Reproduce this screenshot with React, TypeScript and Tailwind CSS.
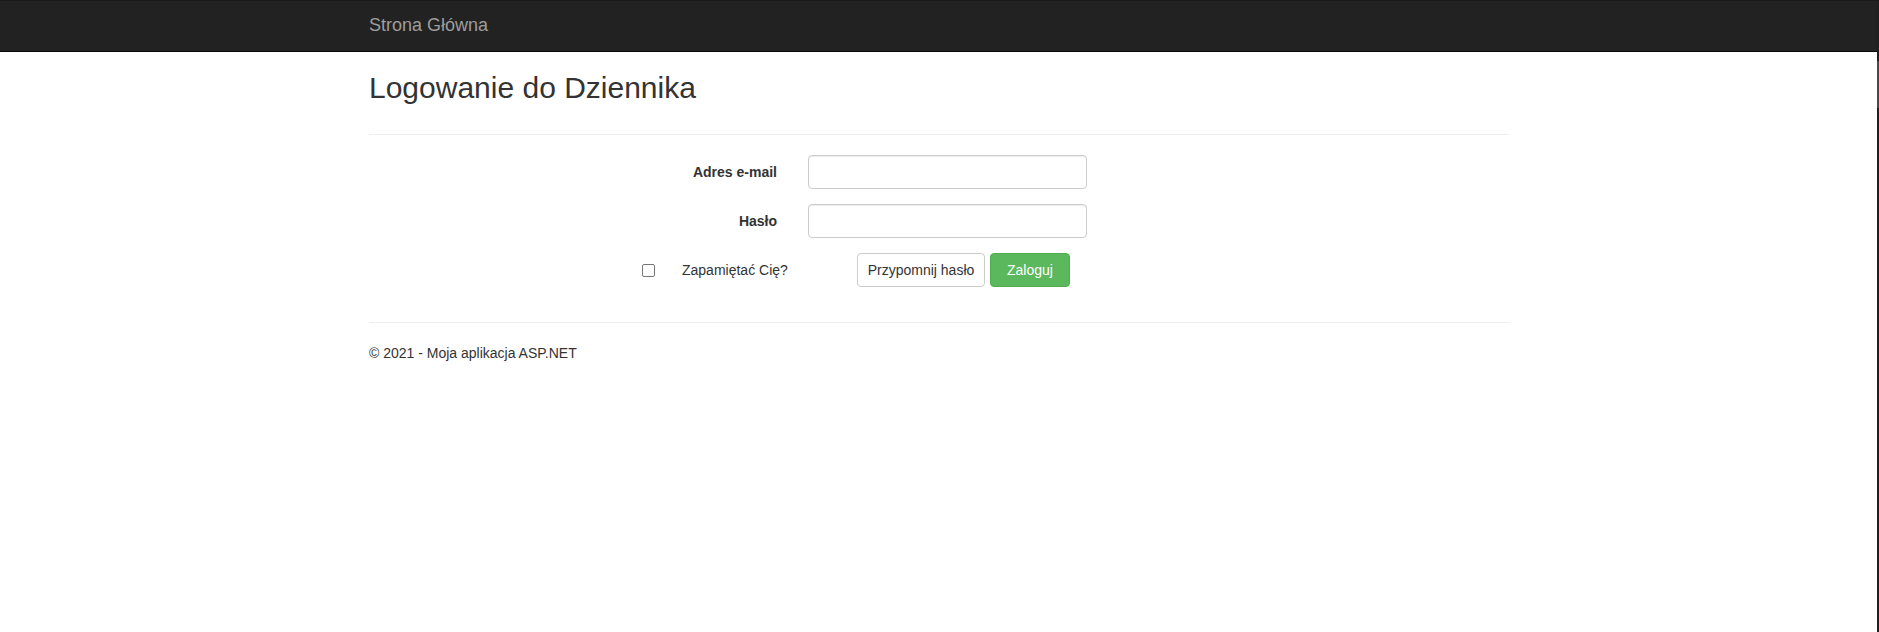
import React from "react";

export default function App() {
  return (
    <div className="flex min-h-[632px] w-full flex-col bg-white font-['Liberation_Sans',Arial,sans-serif] text-[14px] leading-[20px] text-[#333]">
      <div className="h-[1px] w-full bg-[#18181b]" />
      <div className="flex flex-1">
        <div className="flex flex-1 flex-col">
          <nav className="h-[51px] border-b border-[#080808] bg-[#222]">
            <div className="pl-[369px] pt-[14px]">
              <a className="text-[18px] leading-[20px] text-[#9d9d9d]">Strona Główna</a>
            </div>
          </nav>
          <main className="ml-[369px] flex w-[1140px] flex-col pt-[19px]">
            <h2 className="mb-[10px] text-[30px] leading-[33px] font-normal text-[#333]">Logowanie do Dziennika</h2>
            <hr className="mt-[20px] mb-[20px] border-0 border-t border-[#eee]" />
            <form className="flex flex-col">
              <div className="mb-[15px] flex items-start">
                <label className="w-[408px] pt-[7px] text-right font-bold">Adres e-mail</label>
                <input
                  type="email"
                  className="ml-[31px] h-[34px] w-[279px] rounded-[4px] border border-[#ccc] bg-white px-[12px] shadow-[inset_0_1px_1px_rgba(0,0,0,0.075)] outline-none"
                />
              </div>
              <div className="mb-[15px] flex items-start">
                <label className="w-[408px] pt-[7px] text-right font-bold">Hasło</label>
                <input
                  type="password"
                  className="ml-[31px] h-[34px] w-[279px] rounded-[4px] border border-[#ccc] bg-white px-[12px] shadow-[inset_0_1px_1px_rgba(0,0,0,0.075)] outline-none"
                />
              </div>
              <div className="mb-[15px] flex h-[34px] items-center">
                <div className="flex w-[488px] items-center pl-[273px]">
                  <span className="box-border h-[13px] w-[13px] rounded-[2px] border border-[#767676] bg-white" />
                  <span className="ml-[27px]">Zapamiętać Cię?</span>
                </div>
                <div className="flex gap-[5px]">
                  <button type="button" className="flex h-[34px] w-[128px] items-center justify-center whitespace-nowrap rounded-[4px] border border-[#ccc] bg-white text-[14px] leading-[20px] text-[#333]">
                    Przypomnij hasło
                  </button>
                  <button type="button" className="flex h-[34px] w-[80px] items-center justify-center rounded-[4px] border border-[#4cae4c] bg-[#5cb85c] text-[14px] leading-[20px] text-white">
                    Zaloguj
                  </button>
                </div>
              </div>
            </form>
            <hr className="mt-[20px] mb-[20px] border-0 border-t border-[#eee]" />
            <footer>
              <p>© 2021 - Moja aplikacja ASP.NET</p>
            </footer>
          </main>
        </div>
        <div className="flex w-[2px] flex-col bg-[#1f1f1f]">
          <div className="h-[60px]" />
          <div className="h-[47px] bg-[#4a4a4a]" />
        </div>
      </div>
    </div>
  );
}
